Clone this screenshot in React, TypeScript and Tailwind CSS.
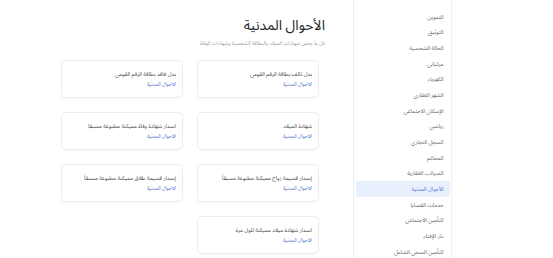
const sidebarItems = [
  'التموين',
  'التوثيق',
  'الحالة الشخصية',
  'مركباتي',
  'الكهرباء',
  'الشهر العقاري',
  'الإسكان الاجتماعي',
  'رياضي',
  'السجل التجاري',
  'المحاكم',
  'الضرائب العقارية',
  'الأحوال المدنية',
  'خدمات القضايا',
  'التأمين الاجتماعي',
  'دار الإفتاء',
  'التأمين الصحي الشامل',
];

const services = [
  'بدل تالف بطاقة الرقم القومي',
  'بدل فاقد بطاقة الرقم القومي',
  'شهادة الميلاد',
  'اصدار شهادة وفاة مميكنة مطبوعة مسبقا',
  'إصدار قسيمة زواج مميكنة مطبوعة مسبقاً',
  'إصدار قسيمة طلاق مميكنة مطبوعة مسبقاً',
  'اصدار شهادة ميلاد مميكنة للول مرة',
];

export default function App() {
  return (
    <div
      dir="rtl"
      className="flex w-[553px] h-[258px] overflow-hidden bg-white pr-[101px]"
      style={{ fontFamily: '"Noto Sans Arabic", "DejaVu Sans", sans-serif' }}
    >
      {/* Sidebar */}
      <aside className="w-[99px] shrink-0 border-x border-[#efefef] pt-[9px] px-[1.5px]">
        {sidebarItems.map((item) => {
          const active = item === 'الأحوال المدنية';
          return (
            <div
              key={item}
              className={`h-[15.67px] flex items-center pr-[6px] text-[5.5px] rounded-[1px] ${
                active ? 'bg-[#e9f0fd] text-[#5677d8]' : 'text-[#666]'
              }`}
            >
              {item}
            </div>
          );
        })}
      </aside>

      {/* Main */}
      <main className="flex-1 pr-[34px] pl-[61px] pt-[16px]">
        <div className="mr-[-6px] flex flex-col gap-[4px]">
          <h1 className="text-[14px] leading-[20px] text-[#262626]">الأحوال المدنية</h1>
          <p className="text-[5px] leading-[7px] text-[#a0a0a0]">
            كل ما يخص شهادات الميلاد والبطاقة الشخصية وشهادات الوفاة
          </p>
        </div>

        <div className="grid grid-cols-2 gap-x-[14px] gap-y-[14px] mt-[13px]">
          {services.map((s) => (
            <div
              key={s}
              className="h-[38px] rounded-[5px] border border-[#ececec] shadow-[0_1px_2px_rgba(0,0,0,0.03)] pr-[6px] pt-[8px]"
            >
              <div className="text-[5.5px] leading-[10px] text-[#4a4a4a]">{s}</div>
              <div className="text-[5px] leading-[10px] text-[#5070cc] mt-[1px]">الأحوال المدنية</div>
            </div>
          ))}
        </div>
      </main>
    </div>
  );
}
